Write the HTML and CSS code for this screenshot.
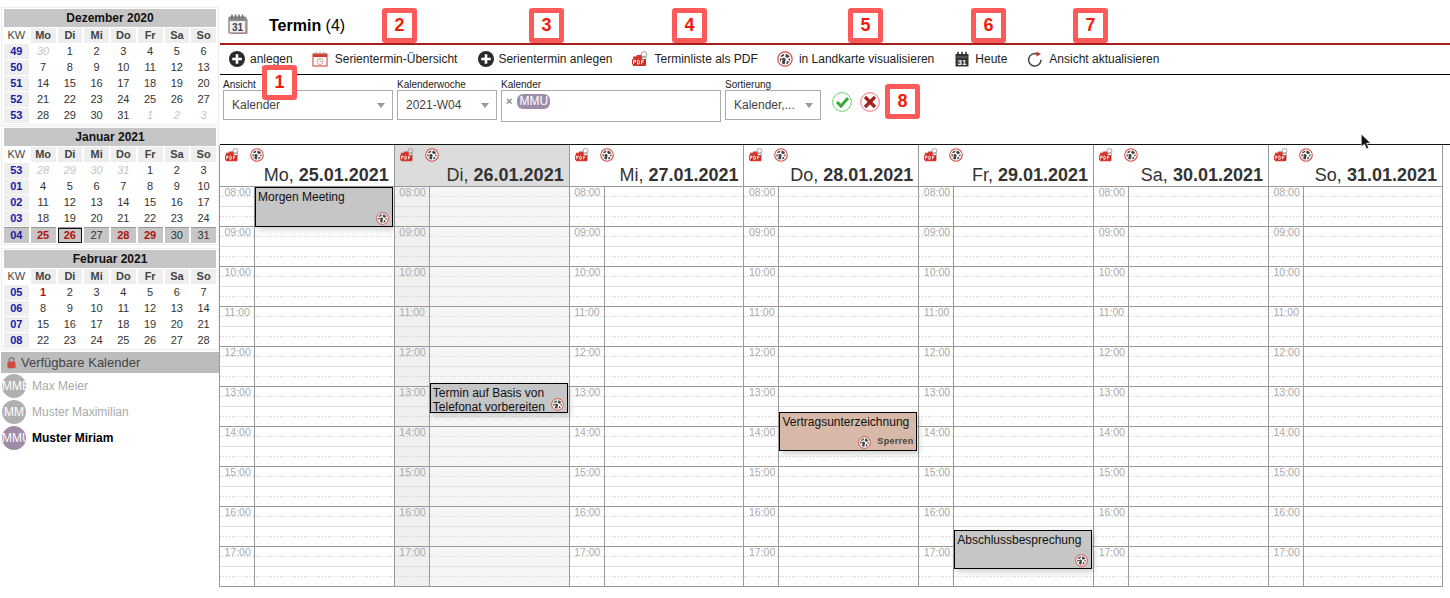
FILE: index.html
```html
<!DOCTYPE html>
<html lang="de">
<head>
<meta charset="utf-8">
<title>Termin</title>
<link rel="stylesheet" href="styles.css">
</head>
<body>
<svg class="defs" width="0" height="0" aria-hidden="true">
  <symbol id="i-plus" viewBox="0 0 16 16"><circle cx="8" cy="8" r="8" fill="#2b2b2b"/><path d="M8 3.2v9.6M3.2 8h9.6" stroke="#fff" stroke-width="2.6"/></symbol>
  <symbol id="i-globe" viewBox="0 0 16 16"><circle cx="8" cy="8" r="7.2" fill="#fff" stroke="#d8473f" stroke-width="1.2"/><circle cx="8" cy="8" r="5.2" fill="#444"/><path d="M8.2 2.5 7.4 5.6 4.6 6.8 2.8 6.2M7.4 5.6 9.6 8 8.4 13.5M9.6 8l3.8-1.6M9.6 8l3 2.8M5 8.5 4 12" fill="none" stroke="#fff" stroke-width="1.5"/></symbol>
  <symbol id="i-pdf" viewBox="0 0 16 16"><circle cx="12" cy="3.4" r="2.8" fill="none" stroke="#999" stroke-width="1"/><path d="M9.5 7 13 5l1.5 3" fill="none" stroke="#999"/><path d="M1 5.5h3l1-1.4h4l1 1.4v2.5H14V15H1Z" fill="#d8392e"/><rect x="0" y="8.3" width="14" height="5.2" fill="#c62c22"/><path d="M1.5 13V9.3h2v1.7h-2M5.5 9.3V13h1.3l.8-1.8-.8-1.9ZM9.6 13V9.3h2.4M9.6 11h2" fill="none" stroke="#fff" stroke-width=".9"/></symbol>
</svg>

<div class="page">
  <aside class="side">
    <table class="month">
      <tr><th colspan="8" class="mtitle">Dezember 2020</th></tr>
      <tr class="wd"><td class="kwh">KW</td><td>Mo</td><td>Di</td><td>Mi</td><td>Do</td><td>Fr</td><td>Sa</td><td>So</td></tr>
      <tr><td class="kw">49</td><td class="off">30</td><td>1</td><td>2</td><td>3</td><td>4</td><td>5</td><td>6</td></tr>
      <tr><td class="kw">50</td><td>7</td><td>8</td><td>9</td><td>10</td><td>11</td><td>12</td><td>13</td></tr>
      <tr><td class="kw">51</td><td>14</td><td>15</td><td>16</td><td>17</td><td>18</td><td>19</td><td>20</td></tr>
      <tr><td class="kw">52</td><td>21</td><td>22</td><td>23</td><td>24</td><td>25</td><td>26</td><td>27</td></tr>
      <tr><td class="kw">53</td><td>28</td><td>29</td><td>30</td><td>31</td><td class="off">1</td><td class="off">2</td><td class="off">3</td></tr>
    </table>
    <table class="month">
      <tr><th colspan="8" class="mtitle">Januar 2021</th></tr>
      <tr class="wd"><td class="kwh">KW</td><td>Mo</td><td>Di</td><td>Mi</td><td>Do</td><td>Fr</td><td>Sa</td><td>So</td></tr>
      <tr><td class="kw">53</td><td class="off">28</td><td class="off">29</td><td class="off">30</td><td class="off">31</td><td>1</td><td>2</td><td>3</td></tr>
      <tr><td class="kw">01</td><td>4</td><td>5</td><td>6</td><td>7</td><td>8</td><td>9</td><td>10</td></tr>
      <tr><td class="kw">02</td><td>11</td><td>12</td><td>13</td><td>14</td><td>15</td><td>16</td><td>17</td></tr>
      <tr><td class="kw">03</td><td>18</td><td>19</td><td>20</td><td>21</td><td>22</td><td>23</td><td>24</td></tr>
      <tr class="cur"><td class="kw">04</td><td class="ev">25</td><td class="ev today">26</td><td>27</td><td class="ev">28</td><td class="ev">29</td><td>30</td><td>31</td></tr>
    </table>
    <table class="month">
      <tr><th colspan="8" class="mtitle">Februar 2021</th></tr>
      <tr class="wd"><td class="kwh">KW</td><td>Mo</td><td>Di</td><td>Mi</td><td>Do</td><td>Fr</td><td>Sa</td><td>So</td></tr>
      <tr><td class="kw">05</td><td class="ev">1</td><td>2</td><td>3</td><td>4</td><td>5</td><td>6</td><td>7</td></tr>
      <tr><td class="kw">06</td><td>8</td><td>9</td><td>10</td><td>11</td><td>12</td><td>13</td><td>14</td></tr>
      <tr><td class="kw">07</td><td>15</td><td>16</td><td>17</td><td>18</td><td>19</td><td>20</td><td>21</td></tr>
      <tr><td class="kw">08</td><td>22</td><td>23</td><td>24</td><td>25</td><td>26</td><td>27</td><td>28</td></tr>
    </table>
    <div class="avail">
      <svg class="lock" viewBox="0 0 10 14" width="9" height="13"><path d="M2.5 6V4a2.5 2.5 0 0 1 5 0v2" fill="none" stroke="#777" stroke-width="1.4"/><rect x="0.5" y="6" width="9" height="7.5" rx="1.5" fill="#cf4a3f"/></svg>
      <span>Verfügbare Kalender</span>
    </div>
    <ul class="people">
      <li class="person"><span class="avatar">MME</span><span>Max Meier</span></li>
      <li class="person"><span class="avatar">MM</span><span>Muster Maximilian</span></li>
      <li class="person active"><span class="avatar">MMU</span><span>Muster Miriam</span></li>
    </ul>
  </aside>

  <main class="main">
    <header class="title">
      <svg class="title-icon" viewBox="0 0 20 20" width="20" height="20">
        <path d="M19 5v14.5H3" fill="none" stroke="#e8907e" stroke-width="1.4"/>
        <rect x="1" y="3" width="17" height="16" rx="1" fill="#f0f0f0" stroke="#777" stroke-width="1.2"/>
        <rect x="1" y="3" width="17" height="4" fill="#8a8a8a"/>
        <path d="M4 .5v4M7.5 .5v4M11 .5v4M14.5 .5v4" stroke="#666" stroke-width="1.4"/>
        <text x="9.5" y="16.5" class="cal31">31</text>
      </svg>
      <h1><b>Termin</b> (4)</h1>
    </header>

    <nav class="toolbar">
      <a class="tool t1"><svg class="ic"><use href="#i-plus"/></svg>anlegen</a>
      <a class="tool t2"><svg class="ic" viewBox="0 0 16 16"><rect x="1" y="3" width="14" height="12" fill="#fff" stroke="#d8392e"/><rect x="1" y="3" width="14" height="3" fill="#d8392e"/><path d="M4 1v3M8 1v3M12 1v3" stroke="#888"/><circle cx="8" cy="10.5" r="3" fill="none" stroke="#d89a8c"/><path d="M8 9v1.5h1.3" fill="none" stroke="#888" stroke-width=".7"/></svg>Serientermin-Übersicht</a>
      <a class="tool t3"><svg class="ic"><use href="#i-plus"/></svg>Serientermin anlegen</a>
      <a class="tool t4"><svg class="ic"><use href="#i-pdf"/></svg>Terminliste als PDF</a>
      <a class="tool t5"><svg class="ic"><use href="#i-globe"/></svg>in Landkarte visualisieren</a>
      <a class="tool t6"><svg class="ic" viewBox="0 0 16 16"><path d="M1.5 3H14.5V15.5H1.5Z" fill="#333"/><path d="M4 .8v3.5M8 .8v3.5M12 .8v3.5" stroke="#333" stroke-width="1.6"/><rect x="2.5" y="5.5" width="11" height="1" fill="#777"/><text x="8" y="13.8" class="cal31 light">31</text></svg>Heute</a>
      <a class="tool t7"><svg class="ic" viewBox="0 0 16 16"><path d="M10.5 3.2A6.2 6.2 0 1 0 14 8.8" fill="none" stroke="#444" stroke-width="1.5"/><path d="M9.5 .5 14 3 9.5 5.5Z" fill="#c4332a"/></svg>Ansicht aktualisieren</a>
    </nav>

    <form class="filters">
      <label class="field f-view"><span class="lbl">Ansicht</span><span class="select">Kalender<i class="caret"></i></span></label>
      <label class="field f-week"><span class="lbl">Kalenderwoche</span><span class="select">2021-W04<i class="caret"></i></span></label>
      <label class="field f-cal"><span class="lbl">Kalender</span><span class="multi"><i class="x">×</i><span class="chip">MMU</span></span></label>
      <label class="field f-sort"><span class="lbl">Sortierung</span><span class="select">Kalender,...<i class="caret"></i></span></label>
      <svg class="action act-ok" viewBox="0 0 20 20" width="20" height="20"><circle cx="10" cy="10" r="9.3" fill="#fff" stroke="#4cc44c" stroke-dasharray="3 .6"/><path d="M5 10l4 4 7-8" fill="none" stroke="#3aa83a" stroke-width="3"/></svg>
      <svg class="action" viewBox="0 0 20 20" width="20" height="20"><circle cx="10" cy="10" r="9.3" fill="#fff" stroke="#f0706a"/><path d="M5 5l10 10M15 5 5 15" fill="none" stroke="#a8201b" stroke-width="3.2"/></svg>
    </form>

    <section class="week">
      <div class="day">
        <div class="head"><div class="head-icons"><svg class="ic-s"><use href="#i-pdf"/></svg><svg class="ic-s"><use href="#i-globe"/></svg></div><div class="date">Mo, <b>25.01.2021</b></div></div>
        <div class="body">
          <div class="hour">08:00</div><div class="hour">09:00</div><div class="hour">10:00</div><div class="hour">11:00</div><div class="hour">12:00</div><div class="hour">13:00</div><div class="hour">14:00</div><div class="hour">15:00</div><div class="hour">16:00</div><div class="hour">17:00</div>
          <article class="event e-morgen"><p>Morgen Meeting</p><div class="meta"><svg class="ic-s"><use href="#i-globe"/></svg></div></article>
        </div>
      </div>
      <div class="day today-col">
        <div class="head"><div class="head-icons"><svg class="ic-s"><use href="#i-pdf"/></svg><svg class="ic-s"><use href="#i-globe"/></svg></div><div class="date">Di, <b>26.01.2021</b></div></div>
        <div class="body">
          <div class="hour">08:00</div><div class="hour">09:00</div><div class="hour">10:00</div><div class="hour">11:00</div><div class="hour">12:00</div><div class="hour">13:00</div><div class="hour">14:00</div><div class="hour">15:00</div><div class="hour">16:00</div><div class="hour">17:00</div>
          <article class="event e-termin"><p>Termin auf Basis von Telefonat vorbereiten</p><div class="meta"><svg class="ic-s"><use href="#i-globe"/></svg></div></article>
        </div>
      </div>
      <div class="day">
        <div class="head"><div class="head-icons"><svg class="ic-s"><use href="#i-pdf"/></svg><svg class="ic-s"><use href="#i-globe"/></svg></div><div class="date">Mi, <b>27.01.2021</b></div></div>
        <div class="body">
          <div class="hour">08:00</div><div class="hour">09:00</div><div class="hour">10:00</div><div class="hour">11:00</div><div class="hour">12:00</div><div class="hour">13:00</div><div class="hour">14:00</div><div class="hour">15:00</div><div class="hour">16:00</div><div class="hour">17:00</div>
        </div>
      </div>
      <div class="day">
        <div class="head"><div class="head-icons"><svg class="ic-s"><use href="#i-pdf"/></svg><svg class="ic-s"><use href="#i-globe"/></svg></div><div class="date">Do, <b>28.01.2021</b></div></div>
        <div class="body">
          <div class="hour">08:00</div><div class="hour">09:00</div><div class="hour">10:00</div><div class="hour">11:00</div><div class="hour">12:00</div><div class="hour">13:00</div><div class="hour">14:00</div><div class="hour">15:00</div><div class="hour">16:00</div><div class="hour">17:00</div>
          <article class="event e-vertrag"><p>Vertragsunterzeichnung</p><div class="meta"><svg class="ic-s"><use href="#i-globe"/></svg><span class="lock-tag">Sperren</span></div></article>
        </div>
      </div>
      <div class="day">
        <div class="head"><div class="head-icons"><svg class="ic-s"><use href="#i-pdf"/></svg><svg class="ic-s"><use href="#i-globe"/></svg></div><div class="date">Fr, <b>29.01.2021</b></div></div>
        <div class="body">
          <div class="hour">08:00</div><div class="hour">09:00</div><div class="hour">10:00</div><div class="hour">11:00</div><div class="hour">12:00</div><div class="hour">13:00</div><div class="hour">14:00</div><div class="hour">15:00</div><div class="hour">16:00</div><div class="hour">17:00</div>
          <article class="event e-abschluss"><p>Abschlussbesprechung</p><div class="meta"><svg class="ic-s"><use href="#i-globe"/></svg></div></article>
        </div>
      </div>
      <div class="day">
        <div class="head"><div class="head-icons"><svg class="ic-s"><use href="#i-pdf"/></svg><svg class="ic-s"><use href="#i-globe"/></svg></div><div class="date">Sa, <b>30.01.2021</b></div></div>
        <div class="body">
          <div class="hour">08:00</div><div class="hour">09:00</div><div class="hour">10:00</div><div class="hour">11:00</div><div class="hour">12:00</div><div class="hour">13:00</div><div class="hour">14:00</div><div class="hour">15:00</div><div class="hour">16:00</div><div class="hour">17:00</div>
        </div>
      </div>
      <div class="day">
        <div class="head"><div class="head-icons"><svg class="ic-s"><use href="#i-pdf"/></svg><svg class="ic-s"><use href="#i-globe"/></svg></div><div class="date">So, <b>31.01.2021</b></div></div>
        <div class="body">
          <div class="hour">08:00</div><div class="hour">09:00</div><div class="hour">10:00</div><div class="hour">11:00</div><div class="hour">12:00</div><div class="hour">13:00</div><div class="hour">14:00</div><div class="hour">15:00</div><div class="hour">16:00</div><div class="hour">17:00</div>
        </div>
      </div>
    </section>
  </main>
</div>

<span class="badge b1">1</span>
<span class="badge b2">2</span>
<span class="badge b3">3</span>
<span class="badge b4">4</span>
<span class="badge b5">5</span>
<span class="badge b6">6</span>
<span class="badge b7">7</span>
<span class="badge b8">8</span>
<svg class="cursor" viewBox="0 0 11 16" width="12" height="17"><path d="M1 1v12l3-2.6 2 4.6 2-1-2-4.4h4Z" fill="#111" stroke="#fff" stroke-width=".6"/></svg>
</body>
</html>
```
FILE: styles.css
```css
* { box-sizing: border-box; }
html, body { margin: 0; padding: 0; background: #fff; }
body { font-family: "Liberation Sans", Arial, sans-serif; color: #222; width: 1450px; height: 598px; overflow: hidden; position: relative; }
.defs { position: absolute; }
.page { display: flex; align-items: flex-start; }

/* Sidebar */
.side { width: 220px; flex: none; padding: 7px 0 0 1px; }
.month { width: 218px; border-collapse: separate; border-spacing: 2px 1px; table-layout: fixed; border: 1px solid #eee; font-size: 11px; margin: 0 0 3px; }
.month:first-child { margin-bottom: 1px; }
.month td { text-align: center; height: 15px; padding: 0; line-height: 15px; color: #333; }
.mtitle { background: #c6c6c6; color: #111; font-size: 12px; font-weight: bold; height: 18px; padding: 0; margin: 0; }
.wd td { background: #eee; font-weight: bold; color: #444; height: 14px; }
.wd .kwh { background: none; font-weight: normal; }
.month .kw { background: #eee; color: #1a1aa6; font-weight: bold; }
.month .off { color: #c4c4c4; font-style: italic; }
.month .cur td { background: #c6c6c6; border-top: 1px solid #999; }
.month .cur .kw { background: #c6c6c6; }
.month .ev { color: #b01212; font-weight: bold; }
.month .today { box-shadow: inset 0 0 0 1px #111; }
.month + .month + .month { margin-bottom: 2px; }
.avail { background: #bcbcbc; height: 21px; width: 218px; display: flex; align-items: center; gap: 5px; padding-left: 6px; font-size: 13px; color: #444; }
.people { list-style: none; margin: 0; padding: 0; }
.person { height: 26px; display: flex; align-items: center; gap: 6px; font-size: 12px; color: #aaa; padding-left: 1px; }
.avatar { width: 24px; height: 24px; border-radius: 50%; background: #b0b0b0; color: #fff; font-size: 12px; line-height: 24px; overflow: hidden; white-space: nowrap; text-align: center; flex: none; }
.active { color: #000; font-weight: bold; }
.active .avatar { background: #a08ca8; font-weight: normal; }

/* Main */
.main { width: 1230px; flex: none; }
.title { height: 45px; border-bottom: 2px solid #a51d1d; display: flex; align-items: center; padding: 9px 0 0 8px; }
.title-icon { flex: none; margin-right: 21px; margin-top: -4px; }
.cal31 { font: bold 10px "Liberation Sans", sans-serif; text-anchor: middle; fill: #444; }
.cal31.light { fill: #fff; font-size: 8px; }
h1 { margin: 0; font-size: 16px; font-weight: normal; color: #000; }
.toolbar { height: 30px; border-bottom: 1px solid #000; display: flex; align-items: center; font-size: 12px; color: #222; padding-bottom: 1px; }
.tool { display: flex; align-items: center; gap: 6px; white-space: nowrap; }
.ic { width: 16px; height: 16px; flex: none; }
.t1 { margin-left: 9px; gap: 5px; }
.t2 { margin-left: 19px; gap: 7px; }
.t3 { margin-left: 21px; gap: 4px; }
.t4 { margin-left: 19px; gap: 7px; }
.t5 { margin-left: 19px; }
.t6 { margin-left: 20px; gap: 5px; }
.t7 { margin-left: 20px; }
.filters { height: 70px; border-bottom: 1px solid #111; display: flex; align-items: flex-start; padding: 5px 0 0 3px; gap: 4px; }
.field { display: flex; flex-direction: column; }
.lbl { font-size: 10px; line-height: 10px; color: #222; }
.select { position: relative; height: 30px; border: 1px solid #aaa; font-size: 12px; color: #444; line-height: 28px; padding-left: 8px; }
.caret { position: absolute; right: 7px; top: 12px; border: 4px solid transparent; border-top: 5px solid #999; border-bottom: 0; }
.f-view { width: 170px; }
.f-week { width: 100px; }
.f-cal { width: 220px; }
.f-sort { width: 96px; }
.multi { height: 32px; border: 1px solid #aaa; display: flex; align-items: flex-start; padding: 3px 0 0 4px; gap: 5px; }
.x { font-style: normal; font-size: 11px; color: #888; font-weight: bold; line-height: 15px; }
.chip { background: #a08ca8; color: #fff; font-size: 12px; border-radius: 6px; padding: 0 2px; line-height: 15px; height: 15px; }
.action { flex: none; margin: 12px 0 0 4px; }
.act-ok { margin-left: 7px; }

/* Week */
.week { display: flex; width: 1224px; margin-left: -1px; }
.day { flex: 1 1 0; min-width: 0; border-left: 1px solid #999; }
.day:last-child { border-right: 1px solid #999; width: 175px; flex: none; }
.head { height: 41px; padding: 3px 5px 0 5px; }
.head-icons { display: flex; gap: 11px; height: 15px; }
.ic-s { width: 14px; height: 14px; flex: none; }
.date { text-align: right; font-size: 18px; color: #333; line-height: 20px; margin-top: 2px; }
.today-col .head { background: #dcdcdc; }
.today-col .body { background: linear-gradient(90deg, #f0f0f0 34px, #f6f6f6 34px); }
.body { position: relative; }
.hour { height: 40px; padding: 0 0 0 4.5px; border-top: 1px solid #999; font-size: 10.5px; line-height: 10px; color: #aaa; position: relative;
  background:
    linear-gradient(#999, #999) 34px 0 / 1px 100% no-repeat,
    repeating-linear-gradient(90deg, #ccc 0 1px, transparent 1px 3px) 0 9px / 100% 1px no-repeat,
    linear-gradient(#ddd, #ddd) 0 19px / 100% 1px no-repeat,
    repeating-linear-gradient(90deg, #ccc 0 1px, transparent 1px 3px) 0 29px / 100% 1px no-repeat;
}
.hour:last-of-type { height: 41px; border-bottom: 1px solid #999; }
.event { position: absolute; left: 35px; width: 138px; border: 1px solid #000; background: #c6c6c6; box-shadow: 2px 3px 6px rgba(0,0,0,.18); font-size: 12px; color: #111; padding: 2px; overflow: hidden; }
.event p { margin: 0; line-height: 14px; }
.meta { position: absolute; right: 3px; bottom: 1px; display: flex; align-items: center; gap: 6px; }
.event .ic-s { width: 13px; height: 13px; }
.e-morgen { top: 1px; height: 40px; }
.e-termin { top: 197px; height: 30px; }
.e-termin p { width: 120px; }
.e-vertrag { top: 226px; height: 39px; background: #d8b8a8; }
.e-abschluss { top: 344px; height: 39px; }
.lock-tag { font-size: 9px; font-weight: bold; color: #444; letter-spacing: .3px; margin-top: -4px; }

/* Overlay markers */
.badge { position: absolute; width: 35px; height: 35px; border: 5px solid #ff5a5a; border-radius: 3px; background: #fff; color: #f21b0c; font-weight: bold; font-size: 18px; display: flex; align-items: center; justify-content: center; top: 8px; }
.b1 { left: 262px; top: 65px; }
.b2 { left: 382px; }
.b3 { left: 529px; }
.b4 { left: 672px; }
.b5 { left: 848px; }
.b6 { left: 971px; }
.b7 { left: 1073px; }
.b8 { left: 885px; top: 84px; }
.cursor { position: absolute; left: 1360px; top: 133px; }
```
